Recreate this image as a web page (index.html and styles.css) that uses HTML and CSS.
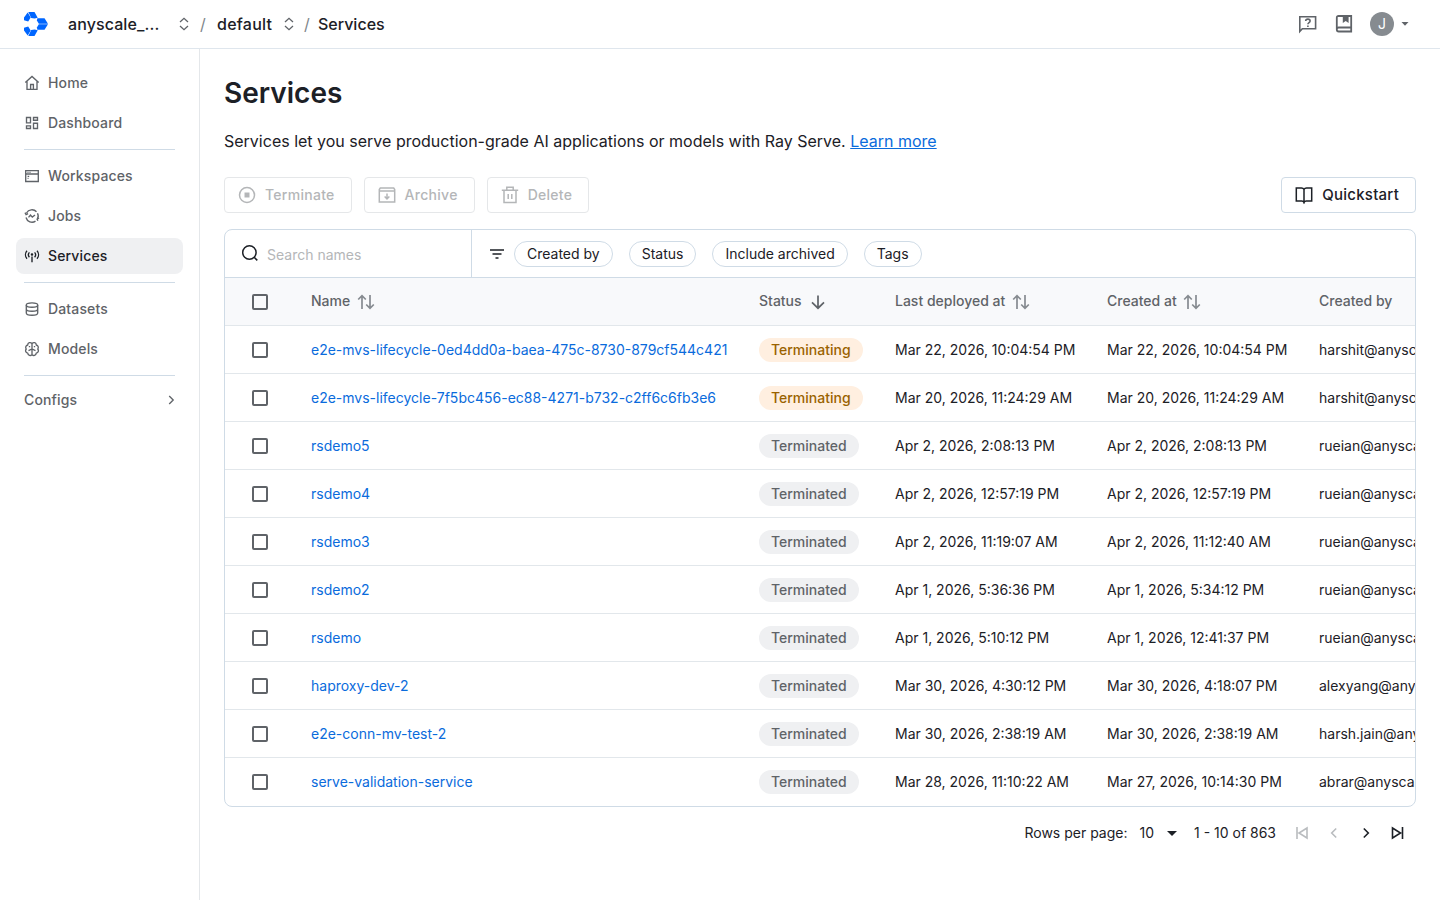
FILE: index.html
```html
<!DOCTYPE html>
<html lang="en">
  <head>
    <meta charset="UTF-8" />
    <meta name="viewport" content="width=device-width, initial-scale=1.0" />
    <title>Services</title>
    <link rel="stylesheet" href="styles.css">
  </head>
  <body>
    <svg class="sprite" width="0" height="0">
      <symbol id="updown" viewBox="0 0 12 14">
        <path d="M2 5 6 1.3 10 5M2 9 6 12.7 10 9" fill="none" stroke="currentColor" stroke-width="1.3" />
      </symbol>
      <symbol id="sort" viewBox="0 0 18 16">
        <path d="M5 15V2M1.2 5.5 5 1.7l3.8 3.8M13 1v13M9.2 10.5l3.8 3.8 3.8-3.8" fill="none" stroke="currentColor" stroke-width="1.7" />
      </symbol>
    </svg>

    <header class="topbar">
      <svg class="logo" width="24" height="24" viewBox="0 0 24 24" fill="#0066ff">
        <path d="M3.700.4 6.700 5.600 4.200 9.500 0 8.200V5.600z" />
        <path d="M4.300 0H10.500l3.200 5.700-3 .9-3.500-.7z" />
        <path d="M13.300 6.200h7.200l3.500 5.600h-9.200l-1.900-3.300z" />
        <path d="M14.800 12.200H24l-3.500 5.600h-7.200l-.4-2.300z" />
        <path d="M3.700 23.600 6.700 18.400 4.200 14.500 0 15.800v2.600z" />
        <path d="M4.300 24H10.500l3.200-5.700-3-.9-3.500.7z" />
      </svg>
      <span class="crumb org">anyscale_...</span>
      <svg class="switch" width="12" height="14"><use href="#updown" /></svg>
      <span class="slash">/</span>
      <span class="crumb project">default</span>
      <svg class="switch" width="12" height="14"><use href="#updown" /></svg>
      <span class="slash last">/</span>
      <span class="crumb">Services</span>
      <div class="top-actions">
        <svg width="20" height="20" viewBox="0 0 20 20" fill="none" stroke="#5f6368" stroke-width="1.600">
          <path d="M1.800 17.500V2.800h15.800v12H4.300z" />
          <path d="M7.700 7.100c0-1.300.9-2 2.200-2s2.200.8 2.200 1.900c0 1.600-2.200 1.600-2.200 3.300M9.900 11.400v1.500" />
        </svg>
        <svg width="20" height="20" viewBox="0 0 20 20" fill="none" stroke="#5f6368" stroke-width="1.800">
          <path d="M17.200 13.500V2H4.500C3.500 2 2.800 2.700 2.800 3.700v11.800c0 1.200.7 2 1.900 2h12.500v-4H4.700c-1.200 0-1.900.7-1.900 1.800" />
          <path d="M8.800 2v7l2.900-2 2.900 2V2z" fill="#5f6368" stroke="none" />
        </svg>
        <span class="avatar">J</span>
        <svg width="8" height="4" viewBox="0 0 8 4"><path d="M.5 0h7L4 3.700z" fill="#5f6368" /></svg>
      </div>
    </header>

    <div class="layout">
      <nav class="sidebar">
        <a class="nav-item">
          <svg width="16" height="16" viewBox="0 0 16 16"><path d="M1.300 7.600 8 1.500l6.700 6.100M3 6.300v8h10v-8M6.600 14.300V9.500h2.800v4.800" /></svg>
          <span>Home</span>
        </a>
        <a class="nav-item">
          <svg width="16" height="16" viewBox="0 0 16 16"><path d="M2.500 2.500h4v5.300h-4zM9.500 2.500h4v2.700h-4zM2.500 10.800h4v2.700h-4zM9.500 8.200h4v5.300h-4z" /></svg>
          <span>Dashboard</span>
        </a>
        <hr />
        <a class="nav-item">
          <svg width="16" height="16" viewBox="0 0 16 16"><path d="M1.700 2.600h12.600v10.900H1.700zM1.700 6h12.600M3.500 4.300h1M5.500 4.300h1M3.600 8.400h1.600M3.600 10.300h.9" /></svg>
          <span>Workspaces</span>
        </a>
        <a class="nav-item">
          <svg width="16" height="16" viewBox="0 0 16 16"><path d="M2.500 5A6.200 6.200 0 0 1 12.500 3.800M13.500 5.200A6.200 6.200 0 0 1 13.200 11.400M11.500 13.100A6.200 6.200 0 0 1 2 9.500M1 4.600l1.100 2 2-1M15 10l-1.900 1.300.8 1.500M4.500 9.400l2-2.300 1.800 2 2.700-2.200" /></svg>
          <span>Jobs</span>
        </a>
        <a class="nav-item active">
          <svg width="16" height="16" viewBox="0 0 16 16"><path d="M3 2.800a6 6 0 0 0 0 8M13 2.800a6 6 0 0 1 0 8M5.400 4.400a3.600 3.600 0 0 0 0 4.800M10.600 4.400a3.600 3.600 0 0 1 0 4.800M8 8.500v5.800" /><circle cx="8" cy="6.400" r=".6" /></svg>
          <span>Services</span>
        </a>
        <hr />
        <a class="nav-item">
          <svg width="16" height="16" viewBox="0 0 16 16"><path d="M2.300 4v8c0 1.200 2.500 2.200 5.700 2.200s5.700-1 5.700-2.200V4M2.300 8c0 1.200 2.500 2.200 5.700 2.200s5.700-1 5.700-2.200" /><ellipse cx="8" cy="4" rx="5.700" ry="2.200" /></svg>
          <span>Datasets</span>
        </a>
        <a class="nav-item">
          <svg width="16" height="16" viewBox="0 0 16 16"><path d="M8 2.600C6.500.8 3.800 1.500 3.700 4 1.700 4.500 1.200 6.500 2.200 8c-1.300 1.700-.5 3.800 1.500 4.200.3 2.400 2.900 3.100 4.300 1.400zM8 2.600C9.500.8 12.200 1.500 12.300 4c2 .5 2.500 2.500 1.500 4 1.300 1.700.5 3.800-1.500 4.200-.3 2.400-2.900 3.100-4.300 1.400M4.500 9.600 8 8l3.500 1.600M5.500 5v1.300M10.500 5v1.300" /></svg>
          <span>Models</span>
        </a>
        <hr />
        <a class="nav-item configs">
          <span>Configs</span>
          <svg width="16" height="16" viewBox="0 0 16 16"><path d="m6.200 4 4 4-4 4" /></svg>
        </a>
      </nav>

      <main class="content">
        <h1>Services</h1>
        <p class="intro">Services let you serve production-grade AI applications or models with Ray Serve. <a>Learn more</a></p>

        <div class="actions">
          <button class="btn" disabled>
            <svg width="20" height="20" viewBox="0 0 20 20"><circle cx="10" cy="10" r="7.500" /><path d="M7.500 7.500h5v5h-5z" fill="currentColor" stroke="none" /></svg>
            <span>Terminate</span>
          </button>
          <button class="btn" disabled>
            <svg width="20" height="20" viewBox="0 0 20 20"><path d="M2.300 6V4.500l1-1.500h13.400l1 1.500V17H2.300zM2.300 6h15.400M10 8.500v5.200M7.600 11.500l2.400 2.400 2.400-2.400" /></svg>
            <span>Archive</span>
          </button>
          <button class="btn" disabled>
            <svg width="20" height="20" viewBox="0 0 20 20"><path d="M1.800 5.300h16.400M4 5.300v12.200h12V5.300M6.800 5V2.300h6.400V5M8.200 9v5M11.800 9v5" /></svg>
            <span>Delete</span>
          </button>
          <button class="btn quickstart">
            <svg width="20" height="20" viewBox="0 0 20 20"><path d="M10 4.500c-.5-1-1.300-1.500-2.500-1.500H2.300v13h5.500c1.200 0 1.800.6 2.200 1.500.4-.9 1-1.500 2.200-1.500h5.500V3h-5.200c-1.200 0-2 .5-2.500 1.500zV18.500" /></svg>
            <span>Quickstart</span>
          </button>
        </div>

        <section class="card">
          <div class="filters">
            <div class="search">
              <svg width="18" height="18" viewBox="0 0 18 18" fill="none" stroke="#1c2026" stroke-width="1.500"><circle cx="8.400" cy="7.500" r="6.700" /><path d="m13.200 12.300 3.100 3.100" /></svg>
              <span>Search names</span>
            </div>
            <div class="chips">
              <svg width="14" height="10" viewBox="0 0 14 10" fill="none" stroke="#1c2026" stroke-width="1.500"><path d="M0 1h14M2.500 5h9M5.500 9h3" /></svg>
              <span class="chip">Created by</span>
              <span class="chip">Status</span>
              <span class="chip">Include archived</span>
              <span class="chip">Tags</span>
            </div>
          </div>
          <table>
            <thead>
              <tr>
                <th class="check"><i class="box"></i></th>
                <th class="name">Name <svg class="sort" width="18" height="16"><use href="#sort" /></svg></th>
                <th class="status">Status <svg class="sort down" width="16" height="16" viewBox="0 0 16 16"><path d="M8 1.500v12.600M2 8.300l6 5.900 6-5.900" fill="none" stroke="currentColor" stroke-width="1.700" /></svg></th>
                <th class="date">Last deployed at <svg class="sort" width="18" height="16"><use href="#sort" /></svg></th>
                <th class="date">Created at <svg class="sort" width="18" height="16"><use href="#sort" /></svg></th>
                <th class="by">Created by</th>
              </tr>
            </thead>
            <tbody>
              <tr>
                <td class="check"><i class="box"></i></td>
                <td><a>e2e-mvs-lifecycle-0ed4dd0a-baea-475c-8730-879cf544c421</a></td>
                <td><span class="pill warn">Terminating</span></td>
                <td>Mar 22, 2026, 10:04:54 PM</td>
                <td>Mar 22, 2026, 10:04:54 PM</td>
                <td>harshit@anyscale.com</td>
              </tr>
              <tr>
                <td class="check"><i class="box"></i></td>
                <td><a>e2e-mvs-lifecycle-7f5bc456-ec88-4271-b732-c2ff6c6fb3e6</a></td>
                <td><span class="pill warn">Terminating</span></td>
                <td>Mar 20, 2026, 11:24:29 AM</td>
                <td>Mar 20, 2026, 11:24:29 AM</td>
                <td>harshit@anyscale.com</td>
              </tr>
              <tr>
                <td class="check"><i class="box"></i></td>
                <td><a>rsdemo5</a></td>
                <td><span class="pill">Terminated</span></td>
                <td>Apr 2, 2026, 2:08:13 PM</td>
                <td>Apr 2, 2026, 2:08:13 PM</td>
                <td>rueian@anyscale.com</td>
              </tr>
              <tr>
                <td class="check"><i class="box"></i></td>
                <td><a>rsdemo4</a></td>
                <td><span class="pill">Terminated</span></td>
                <td>Apr 2, 2026, 12:57:19 PM</td>
                <td>Apr 2, 2026, 12:57:19 PM</td>
                <td>rueian@anyscale.com</td>
              </tr>
              <tr>
                <td class="check"><i class="box"></i></td>
                <td><a>rsdemo3</a></td>
                <td><span class="pill">Terminated</span></td>
                <td>Apr 2, 2026, 11:19:07 AM</td>
                <td>Apr 2, 2026, 11:12:40 AM</td>
                <td>rueian@anyscale.com</td>
              </tr>
              <tr>
                <td class="check"><i class="box"></i></td>
                <td><a>rsdemo2</a></td>
                <td><span class="pill">Terminated</span></td>
                <td>Apr 1, 2026, 5:36:36 PM</td>
                <td>Apr 1, 2026, 5:34:12 PM</td>
                <td>rueian@anyscale.com</td>
              </tr>
              <tr>
                <td class="check"><i class="box"></i></td>
                <td><a>rsdemo</a></td>
                <td><span class="pill">Terminated</span></td>
                <td>Apr 1, 2026, 5:10:12 PM</td>
                <td>Apr 1, 2026, 12:41:37 PM</td>
                <td>rueian@anyscale.com</td>
              </tr>
              <tr>
                <td class="check"><i class="box"></i></td>
                <td><a>haproxy-dev-2</a></td>
                <td><span class="pill">Terminated</span></td>
                <td>Mar 30, 2026, 4:30:12 PM</td>
                <td>Mar 30, 2026, 4:18:07 PM</td>
                <td>alexyang@anyscale.com</td>
              </tr>
              <tr>
                <td class="check"><i class="box"></i></td>
                <td><a>e2e-conn-mv-test-2</a></td>
                <td><span class="pill">Terminated</span></td>
                <td>Mar 30, 2026, 2:38:19 AM</td>
                <td>Mar 30, 2026, 2:38:19 AM</td>
                <td>harsh.jain@anyscale.com</td>
              </tr>
              <tr>
                <td class="check"><i class="box"></i></td>
                <td><a>serve-validation-service</a></td>
                <td><span class="pill">Terminated</span></td>
                <td>Mar 28, 2026, 11:10:22 AM</td>
                <td>Mar 27, 2026, 10:14:30 PM</td>
                <td>abrar@anyscale.com</td>
              </tr>
            </tbody>
          </table>
        </section>

        <div class="pager">
          <span>Rows per page:</span>
          <span class="size">10</span>
          <svg class="caret" width="10" height="5" viewBox="0 0 10 5"><path d="M0 0h10L5 5z" fill="#1c2026" /></svg>
          <span class="range">1 - 10 of 863</span>
          <svg class="page off" width="16" height="16" viewBox="0 0 16 16"><path d="M3 2v12M13 3v10L5 8z" /></svg>
          <svg class="page off" width="16" height="16" viewBox="0 0 16 16"><path d="M10.200 3.500 5.700 8l4.500 4.500" /></svg>
          <svg class="page" width="16" height="16" viewBox="0 0 16 16"><path d="M5.800 3.500 10.300 8l-4.500 4.500" /></svg>
          <svg class="page" width="16" height="16" viewBox="0 0 16 16"><path d="M12.500 2v12M2.500 3v10l8-5z" /></svg>
        </div>
      </main>
    </div>
  </body>
</html>
```
FILE: styles.css
```css
* {
  box-sizing: border-box;
  margin: 0;
  padding: 0;
}
body {
  height: 900px;
  overflow: hidden;
  background: #fff;
  color: #1c2026;
  font-family: Inter, "Liberation Sans", sans-serif;
  font-size: 14px;
}
.sprite {
  display: block;
}

/* top bar */
.topbar {
  display: flex;
  align-items: center;
  height: 49px;
  padding: 0 31px 0 24px;
  border-bottom: 1px solid #dfe6ed;
}
.crumb {
  font-size: 16px;
  font-weight: 500;
}
.org {
  width: 110px;
  margin-left: 20px;
  letter-spacing: 0.1px;
}
.switch {
  color: #5f6368;
}
.slash {
  width: 17px;
  margin-left: 10px;
  color: #80868b;
  font-size: 16px;
}
.project {
  width: 66px;
  letter-spacing: 0.24px;
}
.slash.last {
  width: 13px;
  margin-left: 9px;
  margin-right: 1px;
}
.top-actions {
  display: flex;
  align-items: center;
  gap: 16px;
  margin-left: auto;
}
.avatar {
  width: 24px;
  height: 24px;
  border-radius: 50%;
  background: #868b90;
  color: #fff;
  font-size: 14px;
  line-height: 24px;
  text-align: center;
}
.avatar + svg {
  margin-left: -9px;
}

.layout {
  display: flex;
  height: 851px;
}

/* sidebar */
.sidebar {
  width: 200px;
  padding: 16px 16px 0;
  border-right: 1px solid #e4e7ea;
}
.nav-item {
  display: flex;
  align-items: center;
  gap: 8px;
  height: 36px;
  margin-bottom: 4px;
  padding: 0 8px;
  border-radius: 8px;
  color: #5f6368;
  font-weight: 500;
  letter-spacing: 0.14px;
}
.nav-item span {
  padding-bottom: 1px;
}
.nav-item svg {
  fill: none;
  stroke: currentColor;
  stroke-width: 1.35;
}
.nav-item.active {
  background: #eff0f2;
  color: #1c2026;
}
.sidebar hr {
  height: 1px;
  margin: 8px;
  border: 0;
  background: #cfdbe6;
}
.configs {
  justify-content: space-between;
  margin-top: -2px;
  padding-right: 4px;
}

/* main */
.content {
  width: 1240px;
  padding: 24px 24px 0;
}
h1 {
  height: 40px;
  font-size: 28px;
  font-weight: 600;
  line-height: 40px;
}
.intro {
  margin-top: 16px;
  font-size: 16px;
  line-height: 24px;
}
.intro a {
  color: #0a6bdc;
  text-decoration: underline;
}
.actions {
  display: flex;
  gap: 12px;
  margin-top: 24px;
}
.btn {
  display: flex;
  align-items: center;
  gap: 8px;
  height: 36px;
  padding: 0 16px 0 12px;
  border: 1px solid #cfdbe6;
  border-radius: 4px;
  background: #fff;
  color: #1c2026;
  font-family: inherit;
  font-size: 14px;
  font-weight: 500;
  letter-spacing: 0.28px;
}
.btn span {
  padding-bottom: 1px;
}
.btn svg {
  fill: none;
  stroke: currentColor;
  stroke-width: 1.5;
}
.btn:disabled {
  border-color: #e5e7e9;
  color: #b4b6b8;
}
.quickstart {
  margin-left: auto;
  font-size: 15px;
  letter-spacing: 0.24px;
}

.card {
  margin-top: 16px;
  border: 1px solid #cfdbe6;
  border-radius: 8px;
  overflow: hidden;
}
.filters {
  display: flex;
  height: 48px;
  border-bottom: 1px solid #cfdbe6;
}
.search {
  display: flex;
  align-items: center;
  gap: 8px;
  width: 247px;
  padding-left: 16px;
  border-right: 1px solid #cfdbe6;
  color: #b4b6b8;
}
.search span {
  padding-top: 2px;
}
.chips {
  display: flex;
  align-items: center;
  gap: 16px;
  padding: 1px 0 0 18px;
}
.chips svg {
  margin-right: -6px;
}
.chip {
  height: 26px;
  padding: 0 12px;
  border: 1px solid #cfdbe6;
  border-radius: 13px;
  line-height: 24px;
}

table {
  width: 1250px;
  border-collapse: separate;
  border-spacing: 0;
  table-layout: fixed;
}
th,
td {
  height: 48px;
  padding: 0 16px;
  border-bottom: 1px solid #e2e7eb;
  text-align: left;
  vertical-align: middle;
  white-space: nowrap;
}
th {
  padding-bottom: 1px;
  background: #f8f9fb;
  color: #5f6368;
  font-weight: 500;
}
th.check {
  padding-bottom: 0;
}
tbody tr:last-child td {
  padding-bottom: 1px;
  border-bottom: 0;
}
td a {
  color: #0a6bdc;
}
.check {
  width: 70px;
  padding-left: 27px;
}
.name {
  width: 448px;
}
.status {
  width: 136px;
}
.date {
  width: 212px;
}
th.by {
  padding-bottom: 2px;
}
.box {
  display: block;
  width: 16px;
  height: 16px;
  border: 2px solid #5f6368;
  border-radius: 2px;
}
.sort {
  margin-left: 3px;
  color: #868b90;
  vertical-align: -4px;
}
.sort.down {
  margin-left: 5px;
  color: #5f6368;
}
.pill {
  display: inline-block;
  height: 24px;
  padding: 0 12px;
  border-radius: 12px;
  background: #eff0f2;
  color: #5f6368;
  font-weight: 500;
  line-height: 24px;
}
.pill.warn {
  background: #ffefe0;
  color: #9a6200;
}

/* pagination */
.pager {
  display: flex;
  align-items: center;
  justify-content: flex-end;
  height: 52px;
  padding-right: 10px;
}
.pager span {
  padding-bottom: 1px;
}
.size {
  margin-left: 12px;
}
.caret {
  margin-left: 13px;
}
.range {
  margin: 0 2px 0 17px;
}
.page {
  margin-left: 16px;
  fill: none;
  stroke: #1c2026;
  stroke-width: 1.6;
}
.page.off {
  stroke: #b9bcbf;
}
```
